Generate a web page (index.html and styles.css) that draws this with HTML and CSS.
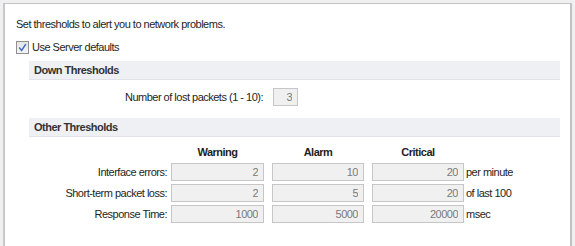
FILE: index.html
```html
<!DOCTYPE html>
<html lang="en">
<head>
    <meta charset="UTF-8">
    <title>Network Thresholds</title>
    <link rel="stylesheet" href="styles.css">
</head>
<body>
    <section class="panel">
        <p class="intro">Set thresholds to alert you to network problems.</p>

        <label class="check-row">
            <span class="check-box">
                <svg width="9" height="9" viewBox="0 0 9 9"><path d="M1.2 4.6 L3.6 7.4 L7.8 1.2" fill="none" stroke="#3d6cc8" stroke-width="1.5"/></svg>
            </span>
            Use Server defaults
        </label>

        <div class="group-title">Down Thresholds</div>
        <div class="down-row">
            <span class="down-label">Number of lost packets (1 - 10):</span>
            <input type="text" class="num-field small" value="3" disabled>
        </div>

        <div class="group-title spaced">Other Thresholds</div>
        <div class="grid">
            <span></span>
            <span class="col-head">Warning</span>
            <span class="col-head">Alarm</span>
            <span class="col-head">Critical</span>
            <span></span>

            <span class="row-label">Interface errors:</span>
            <input type="text" class="num-field" value="2" disabled>
            <input type="text" class="num-field" value="10" disabled>
            <input type="text" class="num-field" value="20" disabled>
            <span class="unit">per minute</span>

            <span class="row-label">Short-term packet loss:</span>
            <input type="text" class="num-field" value="2" disabled>
            <input type="text" class="num-field" value="5" disabled>
            <input type="text" class="num-field" value="20" disabled>
            <span class="unit">of last 100</span>

            <span class="row-label">Response Time:</span>
            <input type="text" class="num-field" value="1000" disabled>
            <input type="text" class="num-field" value="5000" disabled>
            <input type="text" class="num-field" value="20000" disabled>
            <span class="unit">msec</span>
        </div>
    </section>
</body>
</html>
```

FILE: styles.css
```css
body {
    margin: 0;
    background-color: #f0f0f0;
    font-family: "Liberation Sans", Arial, sans-serif;
    font-size: 11px;
    letter-spacing: -0.5px;
    color: #1e1e1e;
    height: 246px;
    overflow: hidden;
}
.panel {
    margin: 3px 3px 0 3px;
    height: 250px;
    background: white;
    border-top: 1px solid #c4c4c4;
    border-left: 2px solid #c8c8cc;
    border-right: 2px solid #c0c0c4;
    padding: 0 10px 0 11px;
}
.intro {
    margin: 13px 0 0 0;
    line-height: 14px;
}
.check-row {
    display: flex;
    align-items: center;
    gap: 3px;
    margin-top: 9px;
    line-height: 14px;
}
.check-box {
    width: 11px;
    height: 11px;
    border: 1px solid #8e8f8f;
    background: linear-gradient(#e4e4e4, #f4f4f4);
    display: flex;
    align-items: center;
    justify-content: center;
}
.group-title {
    margin: 7px 0 0 13px;
    height: 18px;
    line-height: 18px;
    padding-left: 5px;
    background: #eff0f4;
    border-bottom: 1px solid #e2e3e8;
    font-weight: bold;
    color: #333;
}
.group-title.spaced {
    margin-top: 12px;
}
.down-row {
    display: flex;
    align-items: center;
    gap: 10px;
    margin: 8px 0 0 13px;
}
.down-label {
    width: 234px;
    text-align: right;
}
.num-field {
    box-sizing: border-box;
    width: 100%;
    height: 18px;
    margin: 0;
    padding: 0 5px;
    border: 1px solid #c6c6c6;
    background: #f0f0f0;
    color: #7a7a7a;
    text-align: right;
    font-family: inherit;
    font-size: 11px;
    letter-spacing: -0.5px;
}
.num-field.small {
    width: 25px;
}
.grid {
    display: grid;
    grid-template-columns: 134px 93px 92px 92px auto;
    column-gap: 8px;
    row-gap: 3px;
    align-items: center;
    margin: 8px 0 0 13px;
}
.col-head {
    text-align: center;
    font-weight: bold;
    line-height: 15px;
}
.row-label {
    text-align: right;
    margin-right: -4px;
}
.unit {
    margin-left: -6px;
}
```
